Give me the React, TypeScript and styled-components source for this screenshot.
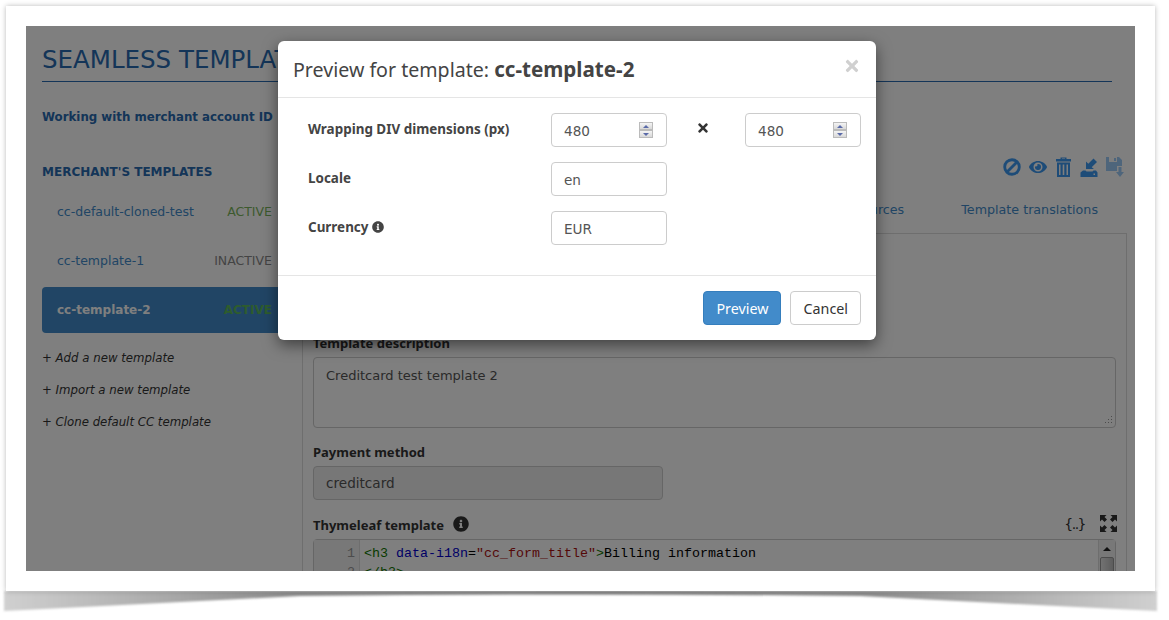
import React from "react";
import styled, { createGlobalStyle } from "styled-components";
import { FaEye, FaInfoCircle, FaTimes } from "react-icons/fa";

const Global = createGlobalStyle`
  html, body { margin: 0; padding: 0; background: #fff; }
  body { width: 1169px; height: 620px; overflow: hidden; font-family: "DejaVu Sans", Verdana, sans-serif; }
`;

const Shot = styled.div`
  position: relative;
  width: 1169px;
  height: 620px;
  padding: 6px 14px 0 6px;
  box-sizing: border-box;
`;
const Swoosh = styled.svg`
  position: absolute;
  left: 0;
  top: 586px;
`;
const Frame = styled.div`
  position: relative;
  width: 1149px;
  height: 585px;
  padding: 20px;
  box-sizing: border-box;
  background: #fff;
  box-shadow: 0 0 5px rgba(0, 0, 0, 0.28);
`;
const Screen = styled.div`
  position: relative;
  width: 1109px;
  height: 545px;
  overflow: hidden;
  background: #fff;
`;
const Page = styled.div`
  padding: 15px 8px 0 16px;
  height: 530px;
`;
const Title = styled.h1`
  margin: 0 15px 0 0;
  height: 40px;
  font-size: 24.5px;
  line-height: 38px;
  font-weight: 400;
  color: #286ab0;
  border-bottom: 1px solid #286ab0;
  white-space: nowrap;
`;
const Account = styled.p`
  margin: 27px 0 0;
  height: 17px;
  font-size: 11.8px;
  line-height: 17px;
  font-weight: 700;
  color: #286ab0;
`;
const Columns = styled.div`
  display: grid;
  grid-template-columns: 246px 825px;
  column-gap: 14px;
  margin-top: 38px;
`;
const SideHeading = styled.h2`
  margin: 0 0 7px;
  height: 17px;
  font-size: 12px;
  line-height: 17px;
  font-weight: 700;
  color: #286ab0;
`;
const TemplateRow = styled.div<{ $selected?: boolean }>`
  display: flex;
  justify-content: space-between;
  align-items: center;
  height: 46px;
  margin-bottom: 3.5px;
  padding: 0 16px 0 15px;
  border-radius: 4px;
  font-size: ${(p) => (p.$selected ? "12px" : "12.5px")};
  font-weight: ${(p) => (p.$selected ? 700 : 400)};
  color: ${(p) => (p.$selected ? "#fff" : "#428bca")};
  background: ${(p) => (p.$selected ? "#428bca" : "transparent")};
`;
const RowStatus = styled.span<{ $active: boolean; $selected?: boolean }>`
  font-size: ${(p) => (p.$selected ? "12px" : "12.5px")};
  color: ${(p) => (p.$selected ? "#5cb85c" : p.$active ? "#7ab55c" : "#888")};
`;
const SideLink = styled.div`
  margin-top: 17px;
  height: 16px;
  font-size: 11.75px;
  line-height: 16px;
  font-style: italic;
  color: #333;
  & + & { margin-top: 16px; }
`;
const Toolbar = styled.div`
  display: flex;
  justify-content: flex-end;
  align-items: center;
  gap: 8px;
  height: 24px;
  margin-top: -9px;
  padding-right: 2px;
  color: #3c98f0;
`;
const Tabs = styled.div`
  display: flex;
  justify-content: flex-end;
  gap: 57px;
  height: 54px;
  padding: 23px 29px 0 0;
  box-sizing: border-box;
  font-size: 12.7px;
  line-height: 16px;
  color: #428bca;
`;
const Panel = styled.div`
  height: 400px;
  padding: 0 10px;
  border: 1px solid #ddd;
  border-bottom: 0;
`;
const HiddenName = styled.div`
  height: 101px;
`;
const FieldLabel = styled.div<{ $spaced?: boolean }>`
  display: flex;
  align-items: center;
  gap: 9px;
  height: 17px;
  margin-top: ${(p) => (p.$spaced ? "16px" : "0")};
  font-family: "Noto Sans", sans-serif;
  font-size: 13px;
  line-height: 17px;
  font-weight: 700;
  color: #333;
  svg { margin-top: -3px; }
`;
const TextArea = styled.div`
  position: relative;
  height: 71px;
  margin-top: 5px;
  padding: 8px 12px;
  box-sizing: border-box;
  border: 1px solid #ccc;
  border-radius: 4px;
  font-size: 13px;
  line-height: 20px;
  color: #555;
  background: #fff;
`;
const Grip = styled.svg`
  position: absolute;
  right: 2px;
  bottom: 2px;
`;
const MethodInput = styled.div`
  width: 350px;
  height: 34px;
  margin: 5px 0 17px;
  padding: 0 12px;
  box-sizing: border-box;
  border: 1px solid #ccc;
  border-radius: 4px;
  background: #eee;
  font-size: 13.6px;
  line-height: 33px;
  color: #555;
`;
const EditorHead = styled.div`
  display: flex;
  justify-content: space-between;
  align-items: center;
  height: 17px;
`;
const EditorTools = styled.div`
  display: flex;
  align-items: center;
  gap: 15px;
  margin-top: -4px;
  margin-right: -1px;
  color: #333;
  font-size: 14px;
  letter-spacing: -1.5px;
`;
const Editor = styled.div`
  display: grid;
  grid-template-columns: 46px 1fr 17px;
  height: 120px;
  margin-top: 5px;
  border: 1px solid #ccc;
  border-radius: 4px 4px 0 0;
  font-family: "Liberation Mono", "Courier New", monospace;
  font-size: 13.33px;
  line-height: 19px;
`;
const Gutter = styled.div`
  padding: 4px 4px 0 0;
  text-align: right;
  background: #f0f0f0;
  border-right: 1px solid #ddd;
  color: #999;
`;
const Code = styled.div`
  padding: 4px 0 0 4px;
  white-space: pre;
  color: #000;
`;
const Tag = styled.span`color: #170;`;
const Attr = styled.span`color: #00c;`;
const Str = styled.span`color: #a11;`;
const ScrollBar = styled.div`
  background: #f0f0f0;
  border-left: 1px solid #ddd;
`;
const ScrollUp = styled.div`
  height: 17px;
  display: flex;
  align-items: center;
  justify-content: center;
  &::before {
    content: "";
    border: 4px solid transparent;
    border-top: 0;
    border-bottom: 4px solid #222;
  }
`;
const ScrollThumb = styled.div`
  height: 60px;
  margin: 0 1px;
  border: 1px solid #999;
  border-radius: 2px;
  background: linear-gradient(90deg, #e4e4e4, #bbb);
`;
const Backdrop = styled.div`
  position: absolute;
  inset: 0;
  background: rgba(0, 0, 0, 0.5);
`;
const Modal = styled.div`
  position: absolute;
  left: 252px;
  top: 15px;
  width: 598px;
  height: 299px;
  background: #fff;
  border-radius: 6px;
  box-shadow: 0 5px 15px rgba(0, 0, 0, 0.5);
  color: #333;
  font-family: "Noto Sans", sans-serif;
`;
const ModalHeader = styled.div`
  position: relative;
  height: 57px;
  padding: 15px 15px 0;
  box-sizing: border-box;
  border-bottom: 1px solid #e5e5e5;
  font-size: 19.6px;
  line-height: 26px;
  color: #444;
  b { font-size: 20.6px; font-weight: 700; }
`;
const CloseIcon = styled(FaTimes)`
  position: absolute;
  right: 15px;
  top: 16px;
  color: #d0d0d0;
`;
const ModalBody = styled.div`
  display: grid;
  grid-template-columns: 243px 116px 78px 116px;
  grid-auto-rows: 34px;
  row-gap: 15px;
  height: 178px;
  padding: 15px 15px 0 30px;
  box-sizing: border-box;
  border-bottom: 1px solid #e5e5e5;
`;
const ModalLabel = styled.div`
  grid-column: 1;
  display: flex;
  align-items: center;
  gap: 4px;
  height: 31px;
  font-size: 13.45px;
  font-weight: 700;
  color: #444;
`;
const InputBox = styled.div`
  position: relative;
  grid-column: ${(p: { $col?: number }) => p.$col ?? 2};
  height: 34px;
  padding: 1px 12px 0;
  box-sizing: border-box;
  border: 1px solid #ccc;
  border-radius: 4px;
  font-family: "DejaVu Sans", sans-serif;
  font-size: 13.6px;
  line-height: 32px;
  color: #555;
`;
const Times = styled.div`
  grid-column: 3;
  display: flex;
  justify-content: center;
  padding: 8px 6px 0 0;
  box-sizing: border-box;
  color: #333;
`;
const Spinner = styled.div`
  position: absolute;
  right: 13px;
  top: 8px;
  display: flex;
  flex-direction: column;
`;
const SpinPart = styled.div<{ $down?: boolean }>`
  display: flex;
  align-items: center;
  justify-content: center;
  width: 12px;
  height: 6px;
  border: 1px solid #bbb;
  background: linear-gradient(#f4f4f4, #d8d8d8);
  &::before {
    content: "";
    border: 3px solid transparent;
    ${(p) => (p.$down ? "border-bottom: 0; border-top: 3px solid #5a6aa8;" : "border-top: 0; border-bottom: 3px solid #5a6aa8;")}
  }
`;
const ModalFooter = styled.div`
  display: flex;
  justify-content: flex-end;
  gap: 9px;
  padding: 15px;
`;
const Button = styled.button<{ $primary?: boolean }>`
  height: 34px;
  padding: 0 12px;
  border: 1px solid ${(p) => (p.$primary ? "#357ebd" : "#ccc")};
  border-radius: 4px;
  background: ${(p) => (p.$primary ? "#428bca" : "#fff")};
  color: ${(p) => (p.$primary ? "#fff" : "#333")};
  font-family: inherit;
  font-size: 14.3px;
`;

const SpinBox = ({ col }: { col: number }) => (
  <InputBox $col={col}>
    480
    <Spinner>
      <SpinPart />
      <SpinPart $down />
    </Spinner>
  </InputBox>
);

const BanIcon = () => (
  <svg width="18" height="18" viewBox="0 0 19 19">
    <circle cx="9.5" cy="9.5" r="7.7" fill="none" stroke="currentColor" strokeWidth="3" />
    <path d="M4 15 15 4" stroke="currentColor" strokeWidth="3" />
  </svg>
);
const TrashIcon = () => (
  <svg width="17" height="20" viewBox="0 0 17 20" fill="currentColor">
    <path d="M5.5 2V.5h6V2H16v2.5H1V2zM7 1.5V2h3v-.5zM2 5.500h13V20H2zM4 7.500v10.500h1.500V7.500zM7.700 7.500v10.500h1.600V7.500zM11.500 7.500v10.500H13V7.500z" fillRule="evenodd" />
  </svg>
);
const ImportIcon = () => (
  <svg width="18" height="20" viewBox="0 0 18 20" fill="currentColor">
    <path d="M6 12V4.500L8.300 6.800 13.500 1.500 17 5l-5.300 5.300L14 12z" />
    <path d="M3 13.500h2.500l1 1h6l1-1H16l1.500 2V20H.5v-4.500zM13.500 16.500v1.500H15v-1.500z" fillRule="evenodd" />
  </svg>
);
const FloppyIcon = () => (
  <svg width="19" height="20" viewBox="0 0 19 20" fill="currentColor" opacity="0.5">
    <path d="M0 0h3v5h8V0h2l3 3v6h-5v5H0zM8 1h2v3H8z" />
    <path d="M12.500 10h3v5H18l-4 5-4-5h2.500z" />
  </svg>
);
const ExpandIcon = () => (
  <svg width="17" height="17" viewBox="0 0 17 17" fill="currentColor">
    <path d="M0 0h6.500L4.500 2 7 4.500 4.500 7 2 4.500 0 6.500zM17 0v6.500l-2-2L12.500 7 10 4.500 12.500 2l-2-2zM0 17v-6.500l2 2L4.500 10 7 12.500 4.500 15l2 2zM17 17h-6.500l2-2L10 12.500 12.500 10l2.500 2.500 2-2z" />
  </svg>
);

export default function App() {
  return (
    <Shot>
      <Global />
      <Swoosh width="1169" height="34">
        <defs>
          <linearGradient id="swoosh-fill" x1="0" x2="1" y1="0" y2="0">
            <stop offset="0" stopColor="#d0d0d0" />
            <stop offset="0.25" stopColor="#8c8c8c" />
            <stop offset="0.5" stopColor="#7c7c7c" />
            <stop offset="0.75" stopColor="#8c8c8c" />
            <stop offset="1" stopColor="#d0d0d0" />
          </linearGradient>
          <filter id="swoosh-blur">
            <feGaussianBlur stdDeviation="1" />
          </filter>
        </defs>
        <path d="M4 5H1157V25L860 10Q580 7 300 10L4 25Z" fill="url(#swoosh-fill)" filter="url(#swoosh-blur)" />
      </Swoosh>
      <Frame>
        <Screen>
          <Page>
            <Title>SEAMLESS TEMPLATES</Title>
            <Account>Working with merchant account ID</Account>
            <Columns>
              <div>
                <SideHeading>MERCHANT'S TEMPLATES</SideHeading>
                <TemplateRow>
                  cc-default-cloned-test
                  <RowStatus $active>ACTIVE</RowStatus>
                </TemplateRow>
                <TemplateRow>
                  cc-template-1
                  <RowStatus $active={false}>INACTIVE</RowStatus>
                </TemplateRow>
                <TemplateRow $selected>
                  cc-template-2
                  <RowStatus $active $selected>ACTIVE</RowStatus>
                </TemplateRow>
                <SideLink>+ Add a new template</SideLink>
                <SideLink>+ Import a new template</SideLink>
                <SideLink>+ Clone default CC template</SideLink>
              </div>
              <div>
                <Toolbar>
                  <BanIcon />
                  <FaEye size={18} />
                  <TrashIcon />
                  <ImportIcon />
                  <FloppyIcon />
                </Toolbar>
                <Tabs>
                  <span>Template resources</span>
                  <span>Template translations</span>
                </Tabs>
                <Panel>
                  <HiddenName />
                  <FieldLabel>Template description</FieldLabel>
                  <TextArea>
                    Creditcard test template 2
                    <Grip width="10" height="10" viewBox="0 0 10 10" fill="#999">
                      <path d="M8 1h1v1H8zM5 4h1v1H5zM8 4h1v1H8zM2 7h1v1H2zM5 7h1v1H5zM8 7h1v1H8z" />
                    </Grip>
                  </TextArea>
                  <FieldLabel $spaced>Payment method</FieldLabel>
                  <MethodInput>creditcard</MethodInput>
                  <EditorHead>
                    <FieldLabel>
                      Thymeleaf template
                      <FaInfoCircle size={16} />
                    </FieldLabel>
                    <EditorTools>
                      <span>{"{..}"}</span>
                      <ExpandIcon />
                    </EditorTools>
                  </EditorHead>
                  <Editor>
                    <Gutter>
                      1<br />2
                    </Gutter>
                    <Code>
                      <Tag>&lt;h3</Tag> <Attr>data-i18n</Attr>=<Str>"cc_form_title"</Str>
                      <Tag>&gt;</Tag>Billing information{"\n"}
                      <Tag>&lt;/h3&gt;</Tag>
                    </Code>
                    <ScrollBar>
                      <ScrollUp />
                      <ScrollThumb />
                    </ScrollBar>
                  </Editor>
                </Panel>
              </div>
            </Columns>
          </Page>
          <Backdrop />
          <Modal>
            <ModalHeader>
              Preview for template: <b>cc-template-2</b>
              <CloseIcon size={18} />
            </ModalHeader>
            <ModalBody>
              <ModalLabel>Wrapping DIV dimensions (px)</ModalLabel>
              <SpinBox col={2} />
              <Times>
                <FaTimes size={14} />
              </Times>
              <SpinBox col={4} />
              <ModalLabel>Locale</ModalLabel>
              <InputBox>en</InputBox>
              <ModalLabel>
                Currency <FaInfoCircle size={12} />
              </ModalLabel>
              <InputBox>EUR</InputBox>
            </ModalBody>
            <ModalFooter>
              <Button $primary>Preview</Button>
              <Button>Cancel</Button>
            </ModalFooter>
          </Modal>
        </Screen>
      </Frame>
    </Shot>
  );
}
